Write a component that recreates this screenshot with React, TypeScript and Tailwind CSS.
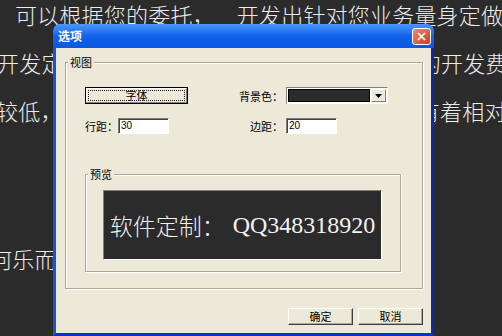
import React from 'react';

const sunken = 'border border-t-[#808080] border-l-[#808080] border-b-white border-r-white';
const raised = 'border border-t-white border-l-white border-r-[#404040] border-b-[#404040] shadow-[inset_-1px_-1px_0_#aca899]';
const etched = 'border border-[#aca899] shadow-[inset_1px_1px_0_#fff,1px_1px_0_#fff]';

const Edit: React.FC<{ value: string }> = ({ value }) => (
  <div className={`flex h-[16px] w-[51px] items-center bg-white pl-[2px] font-['Liberation_Sans',sans-serif] text-[10px] leading-none shadow-[inset_1px_1px_0_#404040] ${sunken}`}>
    {value}
  </div>
);

const Dialog: React.FC = () => {
  return (
    <div className="absolute left-[53px] top-[24px] flex h-[312px] w-[381px] flex-col overflow-hidden rounded-t-[7px]">
      {/* Title bar */}
      <div className="flex h-[24px] shrink-0 items-center justify-between bg-gradient-to-b from-[#4a98fa] via-[#1262ea] to-[#0a58e2] pl-[5px] pr-[3px]">
        <span className="text-[12px] font-bold leading-none text-white">选项</span>
        <div className="flex h-[17px] w-[19px] items-center justify-center rounded-[3px] border border-white bg-gradient-to-br from-[#ea8d6e] to-[#c5401b]">
          <svg width="9" height="9" viewBox="0 0 9 9">
            <path d="M1 1L8 8M8 1L1 8" stroke="white" strokeWidth="1.7" />
          </svg>
        </div>
      </div>

      {/* Body */}
      <div className="flex-1 border-x-[3px] border-b-[3px] border-l-[#1a52de] border-r-[#0b2aa6] border-b-[#0c36c2]">
        <div className="h-full bg-[#ece9d8] pl-[9px] pr-[8px] pt-[14px] text-[11px] leading-[12px] text-black">
          <div className={`h-[227px] ${etched}`}>
            <div className="-mt-[7px] ml-[2px] w-fit bg-[#ece9d8] px-[2px]">视图</div>
            <div className="pl-[19px]">
              <div className="mt-[19px] flex items-center">
                <div className="flex h-[17px] w-[103px] border border-black bg-[#ece9d8]">
                  <div className="flex flex-1 border border-t-white border-l-white border-r-[#808080] border-b-[#808080] p-[1px]">
                    <div className="flex flex-1 items-center justify-center border border-dotted border-[#222] leading-none">字体</div>
                  </div>
                </div>
                <span className="ml-[51px] w-[44px]">背景色：</span>
                <div className={`ml-[3px] flex h-[17px] w-[102px] items-center bg-white p-[1px] ${sunken}`}>
                  <div className="h-full flex-1 border border-black bg-[#2b2b2b]" />
                  <div className="ml-[1px] flex h-full w-[15px] items-center justify-center border border-t-white border-l-white border-r-[#808080] border-b-[#808080] bg-[#ece9d8]">
                    <svg width="7" height="4" viewBox="0 0 7 4">
                      <path d="M0 0H7L3.5 4Z" fill="black" />
                    </svg>
                  </div>
                </div>
              </div>

              <div className="mt-[14px] flex items-center">
                <span className="w-[33px]">行距：</span>
                <Edit value="30" />
                <span className="ml-[81px] w-[33px]">边距：</span>
                <div className="ml-[3px]">
                  <Edit value="20" />
                </div>
              </div>

              <div className={`mt-[40px] h-[98px] w-[316px] ${etched}`}>
                <div className="-mt-[7px] ml-[2px] w-fit bg-[#ece9d8] px-[2px]">预览</div>
                <div className={`ml-[17px] mt-[10px] flex h-[70px] w-[279px] items-center justify-center bg-[#2b2b2b] text-[23px] font-light leading-none text-[#f2f2f2] ${sunken}`}>
                  <span>软件定制：</span>
                  <span className="ml-[8px] font-['Liberation_Serif',serif] text-[24px]">QQ348318920</span>
                </div>
              </div>
            </div>
          </div>

          <div className="mt-[19px] flex justify-end gap-[5px]">
            <div className={`flex h-[17px] w-[65px] items-center justify-center bg-[#ece9d8] leading-none ${raised}`}>确定</div>
            <div className={`flex h-[17px] w-[65px] items-center justify-center bg-[#ece9d8] leading-none ${raised}`}>取消</div>
          </div>
        </div>
      </div>
    </div>
  );
};

export default function App() {
  return (
    <div className="relative h-[336px] w-full overflow-hidden bg-[#2b2b2b] font-['Noto_Sans_CJK_SC',sans-serif]">
      <div className="-mt-[10px] whitespace-nowrap text-[22px] font-light leading-[48px] tracking-[0.2px] text-[#ececec]">
        <div className="pl-[15px]">
          可以根据您的委托，<span className="inline-block w-[22px]" />开发出针对您业务量身定做的软件
        </div>
        <div className="-ml-[3px]">开发定制软件，与大型软件公司相比，我们的开发费用</div>
        <div className="-ml-[4px]">较低，并且我们开发的软件在同类产品中都有着相对</div>
        <div className="-ml-[10px] mt-[100px]">何乐而不为呢？</div>
      </div>
      <Dialog />
    </div>
  );
}
